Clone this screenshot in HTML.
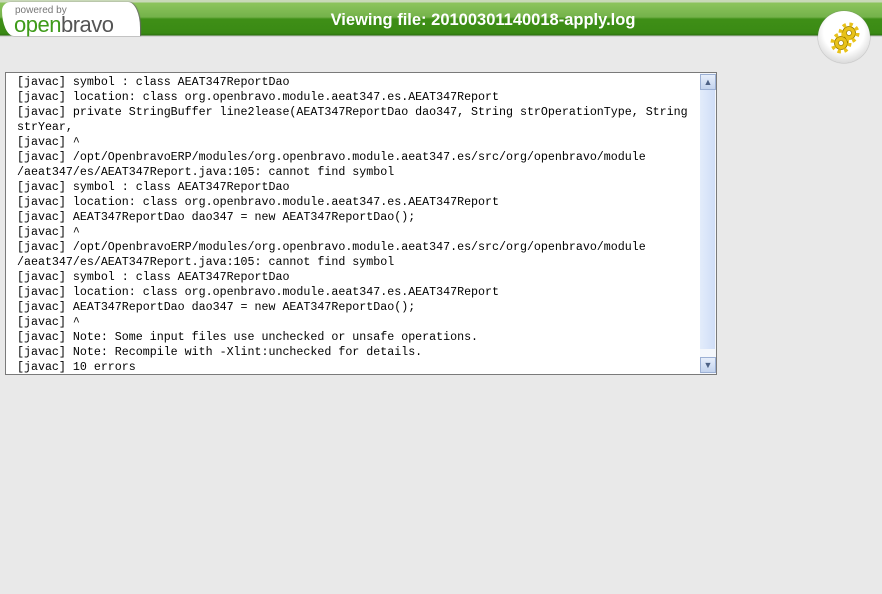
<!DOCTYPE html>
<html><head><style>
body{margin:0;width:882px;height:594px;background:#e9e9e9;font-family:"Liberation Sans",sans-serif;position:relative;overflow:hidden}
.hdr{position:absolute;left:0;top:0;width:882px;height:37px;background:linear-gradient(#c9d9b8 0,#c9d9b8 2px,#8cc45c 3px,#74b24a 17px,#3f8f17 19px,#3a8a14 33px,#2f7510 35px,#bdbdbd 36px,#e9e9e9 37px)}
.logo{position:absolute;left:2px;top:2px;width:138px;height:34px;background:#fff;border-radius:10px 14px 0 14px / 10px 30px 0 30px;box-shadow:1px 0 1px #6a6a6a}
.pw{position:absolute;left:13px;top:3px;font-size:10px;color:#777}
.ob{position:absolute;left:12px;top:10px;font-size:22px;color:#3f9b1a;letter-spacing:-0.5px}
.ob span{color:#555}
.title{position:absolute;left:0;width:966px;text-align:center;top:11px;color:#fff;font-weight:bold;font-size:16.5px}
.gear{position:absolute;left:818px;top:11px;width:52px;height:52px;border-radius:50%;background:radial-gradient(circle at 50% 40%,#fff 50%,#ddd 75%,#999 100%);box-shadow:0 0 1px #666}
.box{position:absolute;left:5px;top:72px;width:710px;height:301px;background:#fff;border:1px solid #7a7a7a}
pre{margin:0;position:absolute;left:11px;top:2px;font-family:"Liberation Mono",monospace;font-size:11.65px;line-height:15px;color:#000}
.sb{position:absolute;left:694px;top:0;width:16px;height:301px;background:#f4f7fc}
.btn{position:absolute;left:0;width:14px;height:14px;border:1px solid #9cb0d4;background:linear-gradient(#e6eefb,#c3d3ee);font-size:9px;text-align:center;line-height:14px;color:#4d6185}
.th{position:absolute;left:0;top:16px;width:15px;height:260px;background:linear-gradient(90deg,#e3ecfb,#d0def7)}
</style></head><body>
<div class="hdr"></div>
<div class="logo"><div class="pw">powered by</div><div class="ob">open<span>bravo</span></div></div>
<div class="title">Viewing file: 20100301140018-apply.log</div>
<div class="gear"><svg width="52" height="52" viewBox="0 0 52 52">
<g fill="#e8c21a" stroke="#8a7000" stroke-width="0.8">
<circle cx="31" cy="22" r="6.5"/><circle cx="31" cy="22" r="8.5" fill="none" stroke="#e8c21a" stroke-width="4" stroke-dasharray="3.3 3.4"/>
<circle cx="23" cy="32" r="6.5"/><circle cx="23" cy="32" r="8.5" fill="none" stroke="#e8c21a" stroke-width="4" stroke-dasharray="3.3 3.4"/>
</g>
<circle cx="31" cy="22" r="2.5" fill="#fff" stroke="#8a7000" stroke-width="0.6"/><circle cx="23" cy="32" r="2.5" fill="#fff" stroke="#8a7000" stroke-width="0.6"/></svg></div>
<div class="box">
<pre>[javac] symbol : class AEAT347ReportDao
[javac] location: class org.openbravo.module.aeat347.es.AEAT347Report
[javac] private StringBuffer line2lease(AEAT347ReportDao dao347, String strOperationType, String
strYear,
[javac] ^
[javac] /opt/OpenbravoERP/modules/org.openbravo.module.aeat347.es/src/org/openbravo/module
/aeat347/es/AEAT347Report.java:105: cannot find symbol
[javac] symbol : class AEAT347ReportDao
[javac] location: class org.openbravo.module.aeat347.es.AEAT347Report
[javac] AEAT347ReportDao dao347 = new AEAT347ReportDao();
[javac] ^
[javac] /opt/OpenbravoERP/modules/org.openbravo.module.aeat347.es/src/org/openbravo/module
/aeat347/es/AEAT347Report.java:105: cannot find symbol
[javac] symbol : class AEAT347ReportDao
[javac] location: class org.openbravo.module.aeat347.es.AEAT347Report
[javac] AEAT347ReportDao dao347 = new AEAT347ReportDao();
[javac] ^
[javac] Note: Some input files use unchecked or unsafe operations.
[javac] Note: Recompile with -Xlint:unchecked for details.
[javac] 10 errors</pre>
<div class="sb"><div class="th"></div><div class="btn" style="top:1px">&#9650;</div><div class="btn" style="top:284px">&#9660;</div></div>
</div>
</body></html>
